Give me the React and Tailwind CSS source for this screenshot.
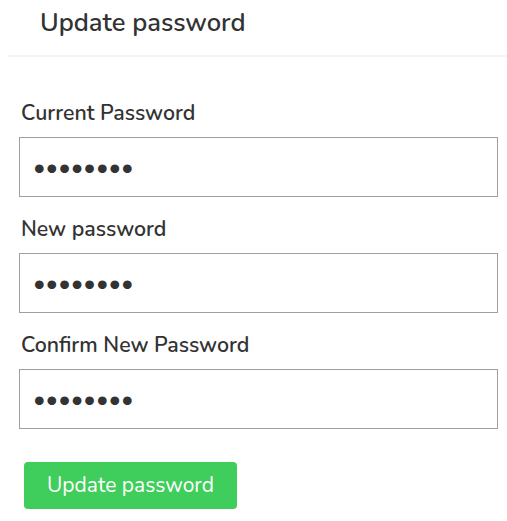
import React from "react";

const fields = [
  { id: "current", label: "Current Password" },
  { id: "new", label: "New password" },
  { id: "confirm", label: "Confirm New Password" },
];

export default function App() {
  return (
    <div className="w-[507px] h-[521px] bg-white pl-[7px] text-[#333]" style={{ fontFamily: "Nunito, Lato, 'Open Sans', sans-serif" }}>
      <div className="h-[57px] border-b-2 border-[#f4f4f4] pl-[33px] pt-[4px]">
        <h1 className="text-[25.5px] leading-[38px] font-semibold">Update password</h1>
      </div>
      <form className="pl-[12px] pr-[9px] pt-[41px]" onSubmit={(e) => e.preventDefault()}>
        {fields.map((f, i) => (
          <div key={f.id} className={i === 0 ? "" : "mt-[17px]"}>
            <label htmlFor={f.id} className="block text-[21.3px] leading-[30px] font-semibold mb-[9px] pl-[2px]">
              {f.label}
            </label>
            <input
              id={f.id}
              type="password"
              readOnly
              value="12345678"
              className="block w-full h-[60px] border border-[#a0a0a0] px-[13px] text-[24px] text-[#333] outline-none"
            />
          </div>
        ))}
        <button
          type="submit"
          className="mt-[33px] ml-[5px] w-[213px] h-[47px] rounded-[4px] bg-[#3fcd5b] text-white text-[21px]"
        >
          Update password
        </button>
      </form>
    </div>
  );
}
